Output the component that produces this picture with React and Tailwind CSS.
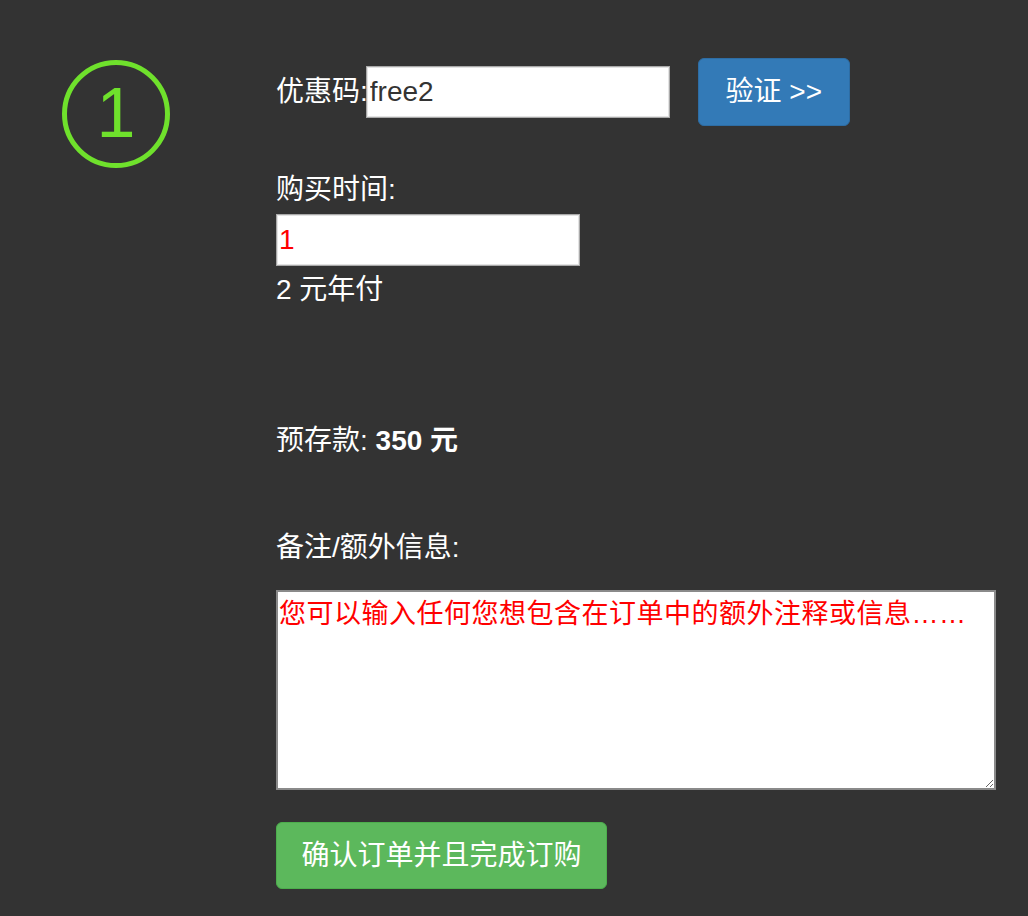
export default function App() {
  return (
    <div className="min-h-screen bg-[#333333] flex pt-[58px] text-white text-[28px] leading-[36px] font-['Liberation_Sans','Noto_Sans_CJK_SC',sans-serif]">
      {/* Step badge */}
      <div className="ml-[62px] mt-[2px] w-[108px] h-[108px] shrink-0 rounded-full border-[5px] border-[#6fe12c] flex items-center justify-center">
        <span className="text-[#6fe12c] text-[70px] leading-none font-['Liberation_Sans',sans-serif] -mt-[2px]">1</span>
      </div>

      <div className="ml-[106px] flex flex-col items-start">
        {/* Coupon */}
        <div className="flex items-center h-[68px]">
          <span className="mr-[-2px]">优惠码:</span>
          <input
            defaultValue="free2"
            className="w-[304px] h-[52px] bg-white border border-[#a9a9a9] shadow-[inset_0_0_0_1px_#e3e3e3] px-[3px] text-[#333] text-[28px] outline-none"
          />
          <button className="ml-[28px] w-[152px] h-[68px] rounded-[6px] bg-[#337ab7] border border-[#2e6da4] text-white text-[28px]">
            验证 &gt;&gt;
          </button>
        </div>

        {/* Period */}
        <div className="mt-[46px]">购买时间:</div>
        <input
          defaultValue="1"
          className="mt-[6px] w-[304px] h-[52px] bg-white border border-[#a9a9a9] shadow-[inset_0_0_0_1px_#e3e3e3] px-[2px] text-[#ff0000] text-[28px] outline-none"
        />
        <div className="mt-[6px]">2 元年付</div>

        <div className="mt-[115px]">
          预存款: <span className="font-bold">350 元</span>
        </div>

        <div className="mt-[71px]">备注/额外信息:</div>
        <textarea
          placeholder="您可以输入任何您想包含在订单中的额外注释或信息……"
          className="mt-[24px] w-[720px] h-[200px] bg-white border-2 border-[#8a8a8a] px-[1px] py-[4px] text-[27px] tracking-[0.5px] leading-[36px] text-[#ff0000] placeholder:text-[#ff0000] outline-none"
        />

        <button className="mt-[32px] w-[331px] h-[67px] rounded-[6px] bg-[#5cb85c] border border-[#4cae4c] text-white text-[28px]">
          确认订单并且完成订购
        </button>
      </div>
    </div>
  );
}
